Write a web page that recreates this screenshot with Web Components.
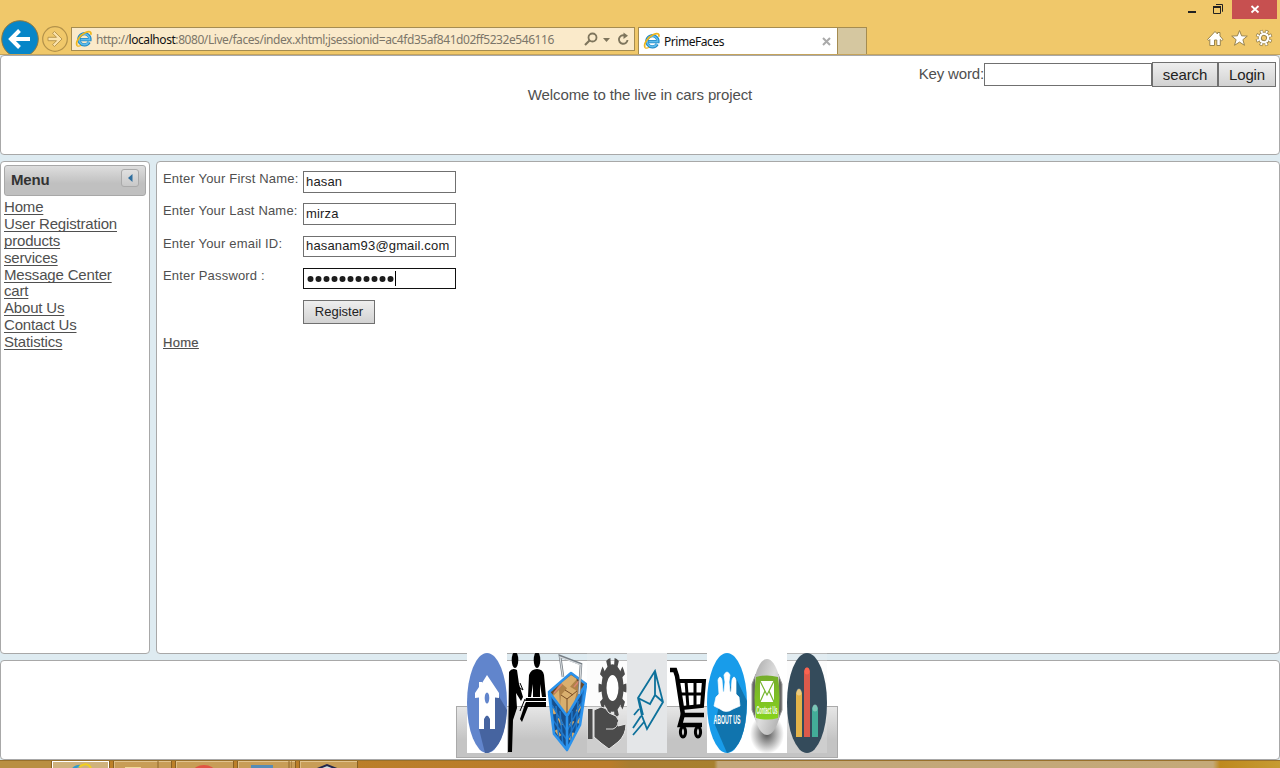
<!DOCTYPE html>
<html lang="en"><head><meta charset="utf-8"><title>PrimeFaces</title>
<style>
html,body{margin:0;width:1280px;height:768px;overflow:hidden}
body{background:#deebf1;font:15px "Liberation Sans",Arial,sans-serif;color:#4f4f4f}
</style></head><body>
<desktop-window></desktop-window>
<script>
const def=(name,html)=>customElements.define(name,class extends HTMLElement{
  constructor(){super();this.attachShadow({mode:'open'}).innerHTML='<style>*{box-sizing:border-box}</style>'+html;}
});

def('ie-logo',`<style>:host{display:block;width:16px;height:16px;flex:none}svg{display:block;overflow:visible}</style>
<svg width="16" height="16" viewBox="0 0 16 16"><path d="M13.2 11.2A5.6 5.6 0 1 1 14 8.7H4.2" fill="none" stroke="#1f87c4" stroke-width="3.2"/><path d="M13 11A5.3 5.3 0 1 1 13.7 8.6H4.6" fill="none" stroke="#5dbcec" stroke-width="1.6"/><path d="M1.2 14.8C-1 11.5 3.5 4.5 9.5 1.6C13 0 15.7.3 14.8 3.8" fill="none" stroke="#edb51c" stroke-width="1.7"/><path d="M1.2 14.8C2.2 15.6 3.8 15 5 14.2" fill="none" stroke="#edb51c" stroke-width="1.3"/></svg>`);

def('window-controls',`<style>:host{display:flex;justify-content:flex-end;height:19px;padding-right:3px}svg{display:block}</style>
<svg width="92" height="19"><path d="M3 11h8v2H3z" fill="#222"/><path d="M31 4.5h6.5v7H37M28.5 6.5h7v7h-7z" fill="none" stroke="#222"/><path d="M28 6h8v2h-8z" fill="#222"/><path d="M47 0h45v19H47z" fill="#c75050"/><path d="M66.5 6l7 6.500M73.500 6l-7 6.500" stroke="#fff" stroke-width="1.8"/></svg>`);

def('address-bar',`<style>:host{display:flex;align-items:center;width:564px;height:24px;border:1px solid #a58c50;background:#faeaca;padding:0 3px 0 4px;font:12px "Noto Sans","Open Sans",sans-serif;color:#7c7669}
.u{margin-left:4px;flex:1;white-space:nowrap;letter-spacing:-.435px}b{font-weight:400;color:#111}svg{display:block}</style>
<ie-logo></ie-logo><span class="u">http://<b>localhost</b>:8080/Live/faces/index.xhtml;jsessionid=ac4fd35af841d02ff5232e546116</span>
<svg width="48" height="18" fill="none" stroke="#7e755c"><circle cx="9.500" cy="7.500" r="4" stroke-width="1.800"/><path d="M6.500 10.500L2 15" stroke-width="2.200"/><path d="M20 8h7l-3.500 4z" fill="#7e755c" stroke="none"/><path d="M44.500 10a4.300 4.300 0 1 1-3-4.600" stroke-width="1.900"/><path d="M40.500 2.500L45 5.700l-4.500 3.200z" fill="#7e755c" stroke="none"/></svg>`);

def('browser-tab',`<style>:host{display:flex;height:27px;font:12px "Noto Sans","Open Sans",sans-serif;color:#111}
.t{display:flex;align-items:center;width:200px;border:1px solid #a58c50;border-bottom:0;background:#fff;padding:0 6px 0 5px}.t span{flex:1;margin-left:4px;letter-spacing:-.45px}.n{width:29px;border:1px solid #a58c50;border-left:0;border-bottom:0;background:#d5c7a0}</style>
<div class="t"><ie-logo></ie-logo><span><slot></slot></span><svg width="9" height="9"><path d="M1 1l7 7M8 1L1 8" stroke="#aaa" stroke-width="2"/></svg></div><div class="n"></div>`);

def('browser-chrome',`<style>:host{display:block;height:55px;background:#f0c86a;border-bottom:1px solid #c5a45c;overflow:hidden}
.r{display:flex;height:35px;align-items:flex-start}.nav{width:71px;height:35px;flex:none}address-bar{margin-top:8px;margin-right:3px}browser-tab{margin-top:8px}.tools{margin:9px 6px 0 auto}svg{display:block}</style>
<window-controls></window-controls>
<div class="r"><svg class="nav" width="71" height="35"><circle cx="20" cy="20" r="18.300" fill="#0786c8" stroke="#8f783f"/><path d="M30 20H12M19.500 11.500L11 20l8.500 8.500" fill="none" stroke="#fff" stroke-width="4"/><circle cx="55" cy="20" r="12.300" fill="none" stroke="#b3924a" stroke-width="1.2"/><path d="M48 18.300h8.500l-4-4 2-1.800 7.500 7.500-7.500 7.500-2-1.800 4-4H48z" fill="#fbe3ac" stroke="#b3924a" stroke-width=".9"/></svg>
<address-bar></address-bar><browser-tab>PrimeFaces</browser-tab>
<svg class="tools" width="68" height="22" fill="#fff" stroke="#99844d"><path d="M1.500 11.500L9 3.500l2.500 2.500V4.500h2.500V8l3 3.500-1.500 1.200-1.200-1.200v6h-3.500V12H8.500v5.500H3.800v-6l-1 1z"/><path d="M33.500 2.500l2.100 5.300 5.700.3-4.400 3.600 1.600 5.600-5-3.200-5 3.200 1.600-5.600-4.400-3.600 5.700-.3z"/><g transform="rotate(11.25 58 10)"><circle cx="58" cy="10" r="5.800"/><circle cx="58" cy="10" r="6.600" fill="none" stroke-width="3.600" pathLength="16" stroke-dasharray="1.150 .850"/><circle cx="58" cy="10" r="6.500" fill="none" stroke="#fff" stroke-width="2.200" pathLength="16" stroke-dasharray=".750 1.250" stroke-dashoffset="-.2"/><circle cx="58" cy="10" r="5.200" stroke="none"/><circle cx="58" cy="10" r="2.600" fill="#f0c86a"/></g></svg></div>`);

def('ui-pane',`<style>:host{display:block;background:#fff;border:1px solid #a8a8a8;border-radius:4px;min-width:0;box-sizing:border-box}</style><slot></slot>`);

def('ui-button',`<style>:host{display:flex;align-items:center;justify-content:center;box-sizing:border-box;border:1px solid #707070;background:linear-gradient(#eee,#d2d2d2);color:#222}</style><slot></slot>`);

def('page-header',`<style>:host{display:block}.s{display:flex;justify-content:flex-end;align-items:center;height:25px;margin:6px 3px 0 0;line-height:21px}.i{width:168px;height:23px;border:1px solid #707070}.a{width:66px;height:25px}.b{width:58px;height:25px}.w{text-align:center;line-height:15px;letter-spacing:-.11px}.s span{letter-spacing:-.15px;padding-bottom:2px}ui-button{letter-spacing:-.1px;padding-bottom:1px}</style>
<div class="s"><span>Key word:</span><div class="i"></div><ui-button class="a">search</ui-button><ui-button class="b">Login</ui-button></div><div class="w">Welcome to the live in cars project</div>`);

def('side-menu',`<style>:host{display:block;padding:3px}.h{display:flex;justify-content:space-between;align-items:flex-start;height:31px;border:1px solid #a8a8a8;border-radius:3px;background:linear-gradient(#dedede,#c0c0c0 60%);padding:3px 6px 0 6px;color:#333;font-weight:700}.h span{line-height:22px;letter-spacing:-.15px}.t{width:18px;height:18px;border:1px solid #aaa;border-radius:3px;background:linear-gradient(#e0e0e0,#c8c8c8)}svg{display:block}
nav{display:flex;flex-direction:column;align-items:flex-start;margin-top:3px}a{height:16.880px;line-height:15px;letter-spacing:-.17px;text-decoration:underline;text-decoration-thickness:1px;text-underline-offset:2px;text-decoration-skip-ink:none}</style>
<div class="h"><span>Menu</span><div class="t"><svg width="16" height="16"><path d="M10.500 4v8L6 8z" fill="#2e6e9e"/></svg></div></div>
<nav><a>Home</a><a>User Registration</a><a>products</a><a>services</a><a>Message Center</a><a>cart</a><a>About Us</a><a>Contact Us</a><a>Statistics</a></nav>`);

def('form-row',`<style>:host{display:grid;grid-template-columns:140px 153px;height:32.300px;align-items:start}.l{line-height:15px;white-space:nowrap;letter-spacing:.18px}</style><div class="l"><slot name="label"></slot></div><slot></slot>`);

def('text-field',`<style>:host{display:flex;align-items:center;box-sizing:border-box;height:21.500px;border:1px solid #707070;padding:0 2px 1px;color:#1c1c1c;white-space:nowrap;letter-spacing:.16px}:host([focused]){border-color:#111}</style><slot></slot>`);

def('register-form',`<style>:host{display:block;padding:9px 6px;font-size:13px}.m{width:72px;height:24px;padding-bottom:2px}.home{display:inline-block;line-height:15px;text-decoration:underline;letter-spacing:.3px;margin-top:3px;-webkit-text-stroke:.2px #4f4f4f}.p{display:flex;align-items:center;height:18px;padding-top:1px}.p i{width:1px;height:15px;background:#000}</style>
<form-row><span slot="label">Enter Your First Name:</span><text-field>hasan</text-field></form-row>
<form-row><span slot="label">Enter Your Last Name:</span><text-field>mirza</text-field></form-row>
<form-row><span slot="label">Enter Your email ID:</span><text-field>hasanam93@gmail.com</text-field></form-row>
<form-row><span slot="label">Enter Password :</span><text-field focused><span class="p"><svg width="89" height="10"><path d="M4.500 5h81" stroke="#1c1c1c" stroke-width="6" stroke-linecap="round" stroke-dasharray="0 8"/></svg><i></i></span></text-field></form-row>
<form-row><ui-button class="m">Register</ui-button></form-row><a class="home">Home</a>`);

def('dock-bar',`<style>:host{display:block;width:382px;height:105px;position:relative}.g{position:absolute;inset:53px 0 0;border:1px solid #aaa;background:linear-gradient(#e6e6e6,#c4c4c4 65%)}.i{position:absolute;left:11px;top:0;display:flex}svg{display:block;width:40px;height:100px}text{font-family:"Liberation Sans",Arial,sans-serif;font-weight:700}</style>
<div class="g"></div><div class="i">
<svg viewBox="0 0 40 100"><path d="M0 0h40v100H0z" fill="#fff"/><ellipse cx="20" cy="50" rx="20" ry="50" fill="#6185cc"/><path d="M30 40l10 17q-2 36-19 43h-3l-6-24z" fill="#4664a0"/><path d="M8 40l4-6v-5h3v1l5-8 12 18v5l-4-.5v31.500h-5V66q-3-7-6 0v10h-5V44.500L8 45z" fill="#fff"/><ellipse cx="20" cy="45" rx="2.300" ry="5.500" fill="#6185cc"/></svg>
<svg viewBox="0 0 40 100"><ellipse cx="8" cy="7" rx="3.300" ry="8"/><ellipse cx="30" cy="7" rx="3.300" ry="8"/><path d="M2 19q3-5 8-2l2 14 4 13-2 4-5-8 1 15-4 12-1 32H1zM22 22q2-6 8-6t7 6l2 22h-4l-2-13v13H26V31l-2 13h-3zM19 45h20v3H18zM19 49h20v5H21l-6 15-2-3 5-15z"/><path d="M13 30l3 7-3-2M18 46l-5 12" stroke="#000" fill="none" stroke-width="1"/></svg>
<svg viewBox="0 0 40 100"><path d="M2 40l18 24 19-34-6 42-13 25L7 81z" fill="#174f8c"/><path d="M2 39l22-20 15 12-19 32z" fill="#6b4928"/><path d="M5 42l7-10 8-7 6-2 7 8 2 6-9 14-7 10z" fill="#b08348"/><path d="M14 30l10-8 6 4-9 10zM14 42l8-9 8 5-4 17-8 6-5-7zM6 43l6-6 1 16z" fill="#d9af6e"/><path d="M14 42l6 4 10-8M20 46v17M18 37l8 5" stroke="#7a4e27" fill="none"/><path d="M7 40l8-9M27 34l5-6" stroke="#d98370" stroke-width="1.500"/><path d="M5 54l3 7M12 65l3 7M23 73l3-5M30 59l4-7M9 77l4 6M23 87l4-7M30 70l3-5" stroke="#d6ab68" stroke-width="3"/><path d="M5 52l15 26 17-33M6 67l14 20 14-27M7 82L4 44M12 88L9 53M16 93l-3-35M24 90l1-32M29 81l2-33M33 72l3-34" fill="none" stroke="#1f78cc" stroke-width="1.500"/><path d="M2 39l22-19 15 11-19 32zM2 40l5 41 13 16 13-25 6-40M20 64v32" fill="none" stroke="#2b92ec" stroke-width="2.600" stroke-linejoin="round"/><path d="M16 24L13 3l21 8-2 30" fill="none" stroke="#777f86" stroke-width="2.600"/><path d="M16 24L13 4l21 8-2 29" fill="none" stroke="#d6dadd" stroke-width="1.200"/></svg>
<svg viewBox="0 0 40 100"><path d="M0 0h40v100H0z" fill="#f2f2f2" opacity=".22"/><g transform="translate(25.500 35) scale(1 2.170)"><circle r="6.300" fill="#fff"/><circle r="8.500" fill="none" stroke="#4b4b4b" stroke-width="5"/><circle r="12" fill="none" stroke="#4b4b4b" stroke-width="4" pathLength="20" stroke-dasharray="1 1" stroke-dashoffset=".5"/></g><path d="M1 56h4.500v30H1z" fill="#4b4b4b"/><path d="M7 57l7-3q5 0 8 6l7 3q4 4 2 10l8-2q0 11-8 18l-9 7-8-6-7-6z" fill="#4b4b4b" stroke="#e8e8e8" stroke-width="1"/><path d="M19 76h7q5-2 5-7" fill="none" stroke="#ddd" stroke-width="1"/></svg>
<svg viewBox="0 0 40 100"><path d="M0 0h40v100H0z" fill="#e4e6e8"/><path d="M11 45l17-27 8 31-16 27-5-13zM11 45l12 6 5-9 8 7M28 18v24M12 46l4 16M6 75l8-12M6 82l11-13M7 62l5-6M15 63l5 13" fill="none" stroke="#0d719b" stroke-width="1.800"/></svg>
<svg viewBox="0 0 40 100"><g fill="none" stroke="#000"><path d="M3 17h5l2 6 6 39h21" stroke-width="4.500"/><path d="M10 28h27l-2 25-20 2" stroke-width="4"/><path d="M12 41h24M19 28l2 27M28 28v26" stroke-width="3"/><path d="M16 61l-3 11h22" stroke-width="4.500"/><ellipse cx="16" cy="79" rx="2.600" ry="5" stroke-width="3"/><ellipse cx="31" cy="79" rx="2.600" ry="5" stroke-width="3"/></g></svg>
<svg viewBox="0 0 40 100"><path d="M0 0h40v100H0z" fill="#fff"/><ellipse cx="20" cy="50" rx="20" ry="50" fill="#189cea"/><path d="M29 25l11 23q-1 47-20 52L8 72l4-20z" fill="#1074ae"/><path d="M7 53l2-9 3-3-1-14q2-6 4 0l1 12h1l1-10-1-7q3-6 6 0l-1 7 1 10h1l1-12q2-6 4 0v14l3 3 1 9-7 3q-7 5-13 0z" fill="#fff" stroke="#fff" stroke-width=".7"/><text transform="translate(6.500 70.500) scale(.5 1)" font-size="13" textLength="54" lengthAdjust="spacingAndGlyphs" fill="#fff">ABOUT US</text></svg>
<svg viewBox="0 0 40 100"><defs><radialGradient id="s"><stop offset="0" stop-color="#555"/><stop offset="1" stop-color="#fff"/></radialGradient><linearGradient id="m" x2="1" y2="1"><stop stop-color="#aaa"/><stop offset=".5" stop-color="#ddd"/><stop offset="1" stop-color="#aaa"/></linearGradient><linearGradient id="r" x2="0" y2="1"><stop stop-color="#75ad2c"/><stop offset="1" stop-color="#87d31d"/></linearGradient></defs><path d="M0 0h40v100H0z" fill="#fff"/><ellipse cx="20" cy="81" rx="17" ry="20" fill="url(#s)"/><path d="M9 21h22l4 10v26l-4 10H9L5 57V31z" fill="#666" stroke="#999"/><path d="M8 23q5-17 12-17t12 17v43q-5 16-12 16T8 66z" fill="url(#m)"/><path d="M9 24q11-3 22 0 3 20 0 41-11 3-22 0-3-21 0-41" fill="url(#r)"/><path d="M13 28h14v21H13z" fill="#fff"/><path d="M13 28l7 14 7-14M13 49l5-11M27 49l-5-11" fill="none" stroke="#75b52c" stroke-width="1.200"/><text transform="translate(9.500 61) scale(.5 1)" font-size="10" textLength="42" lengthAdjust="spacingAndGlyphs" fill="#fff">Contact Us</text></svg>
<svg viewBox="0 0 40 100"><path d="M0 0h40v100H0z" fill="#f2f2f2" opacity=".22"/><ellipse cx="20" cy="50" rx="20" ry="50" fill="#344b5b"/><path d="M9 40q3-8 6 0v44H9z" fill="#e3b349"/><path d="M17 18q3-7 6 0v66h-6z" fill="#dd5a4b"/><path d="M25 55q3-7 6 0v29h-6z" fill="#43ad98"/><g fill="#fff" opacity=".3"><ellipse cx="12" cy="39" rx="2.500" ry="3.500"/><ellipse cx="28" cy="55" rx="2.500" ry="3.500"/></g><ellipse cx="20" cy="18" rx="2.500" ry="3.500" fill="#fb6350"/></svg>
</div>`);

def('task-bar',`<style>:host{display:flex;height:8px;box-sizing:border-box;border-top:1px solid #98702c;padding-left:51px;gap:3px;overflow:hidden;background:linear-gradient(90deg,#b98f42 0,#b98f42 50px,#bd8128 52px,#b97c2b 610px,#a87d31 630px,#a8802f 714px,#c2a678 718px,#c4a978 1213px,#be891e 1220px,#c69b32 1280px)}div{width:59px;height:9px;border:1px solid #886022;border-top:0;box-shadow:inset 0 1px #e2c48e,inset 1px 0 #ddbd84;background:#c89d57;display:flex;justify-content:center}.a{background:#cfb27d;box-shadow:inset 0 1px #fff,inset 1px 0 #fff,inset -1px 0 #fff}svg{display:block}</style>
<div class="a"><svg width="24" height="8"><path d="M4 8Q7 5 11 5" fill="none" stroke="#2f9bcd" stroke-width="2.500"/><path d="M10 6Q18 0 22 7" fill="none" stroke="#f1cf20" stroke-width="2"/></svg></div><div><svg width="36" height="8"><path d="M0 6h16v2H0z" fill="#f1da99"/><path d="M33 0v8" stroke="#8e672a"/></svg></div><div><svg width="24" height="8"><ellipse cx="11" cy="11" rx="11" ry="7" fill="#e15343"/></svg></div><div><svg width="50" height="8"><path d="M9 4h22v4H9z" fill="#568cb7"/><path d="M47 0v8M50 0v8" stroke="#8e672a"/></svg></div><div><svg width="24" height="8"><path d="M0 8l10-4 10 4" fill="#cfdce0" stroke="#22264d" stroke-width="2"/></svg></div>`);

def('desktop-window',`<style>:host{display:block;width:1280px;height:768px;position:relative}
.n{height:100px}.mid{display:grid;grid-template-columns:150px 1124px;gap:6px;height:493px;margin:6px 0}.s{height:100px}dock-bar{position:absolute;left:456px;top:653px}</style>
<browser-chrome></browser-chrome><ui-pane class="n"><page-header></page-header></ui-pane>
<div class="mid"><ui-pane><side-menu></side-menu></ui-pane><ui-pane><register-form></register-form></ui-pane></div>
<ui-pane class="s"></ui-pane><dock-bar></dock-bar><task-bar></task-bar>`);
</script></body></html>
